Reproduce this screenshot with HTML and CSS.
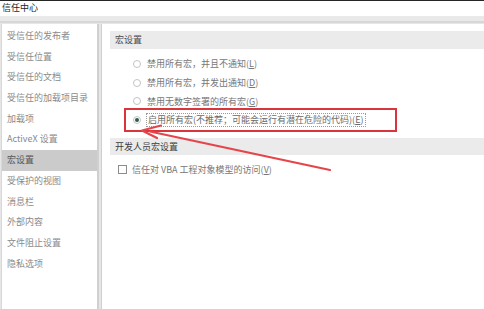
FILE: index.html
```html
<!DOCTYPE html>
<html lang="zh-CN">
<head>
<meta charset="utf-8">
<title>信任中心</title>
<link rel="stylesheet" href="styles.css">
</head>
<body>
<div class="window">
  <div class="titlebar">信任中心</div>
  <div class="strip"></div>
  <div class="main">
    <nav class="nav">
      <div class="nav-item">受信任的发布者</div>
      <div class="nav-item">受信任位置</div>
      <div class="nav-item">受信任的文档</div>
      <div class="nav-item">受信任的加载项目录</div>
      <div class="nav-item">加载项</div>
      <div class="nav-item">ActiveX 设置</div>
      <div class="nav-item active">宏设置</div>
      <div class="nav-item">受保护的视图</div>
      <div class="nav-item">消息栏</div>
      <div class="nav-item">外部内容</div>
      <div class="nav-item">文件阻止设置</div>
      <div class="nav-item">隐私选项</div>
    </nav>
    <section class="content">
      <div class="section-head">宏设置</div>
      <div class="options">
        <div class="option"><span class="radio"></span><span class="label">禁用所有宏，并且不通知(<u>L</u>)</span></div>
        <div class="option"><span class="radio"></span><span class="label">禁用所有宏，并发出通知(<u>D</u>)</span></div>
        <div class="option"><span class="radio"></span><span class="label">禁用无数字签署的所有宏(<u>G</u>)</span></div>
        <div class="option selected"><span class="radio checked"></span><span class="label focus">启用所有宏(不推荐；可能会运行有潜在危险的代码)(<u>E</u>)</span></div>
      </div>
      <div class="section-head second">开发人员宏设置</div>
      <div class="check-row"><span class="checkbox"></span><span class="label">信任对 VBA 工程对象模型的访问(<u>V</u>)</span></div>
    </section>
  </div>
</div>
<div class="highlight"></div>
<svg class="arrow" width="484" height="309" viewBox="0 0 484 309">
  <path d="M330 170 L150 131.5" stroke="#e5454a" stroke-width="2.2" fill="none" stroke-linecap="round"/>
  <path d="M161 125.5 L142 130.5 L157 138" stroke="#e5454a" stroke-width="2.2" fill="none" stroke-linecap="round" stroke-linejoin="round"/>
</svg>
</body>
</html>
```
FILE: styles.css
```css
html, body {
  margin: 0;
  padding: 0;
  background: #ffffff;
  overflow: hidden;
}
body {
  width: 484px;
  height: 309px;
  position: relative;
  font-family: "Noto Sans CJK SC", "Noto Sans", sans-serif;
  font-size: 9px;
}
.window {
  display: flex;
  flex-direction: column;
  height: 309px;
  border-top: 1px solid #262626;
  box-sizing: border-box;
}
.titlebar {
  height: 15px;
  line-height: 13px;
  padding-left: 2px;
  color: #1e1e1e;
  font-size: 9px;
}
.strip {
  height: 5px;
  background: #e9e9e9;
  border-bottom: 2px solid #d7d7d7;
}
.main {
  flex: 1;
  display: flex;
  background: #e6e6e6;
  padding-top: 1px;
  padding-left: 1px;
}
.nav {
  width: 95px;
  background: #ffffff;
  border-left: 1px solid #d8d8d8;
  border-right: 2px solid #d0d0d0;
  padding-top: 2px;
}
.nav-item {
  height: 20.7px;
  line-height: 20.7px;
  padding-left: 5px;
  color: #8a8a8a;
  white-space: nowrap;
}
.nav-item.active {
  background: #cbcbcb;
  color: #555555;
}
.content {
  flex: 1;
  margin-left: 2px;
  background: #ffffff;
  border-left: 1px solid #cfcfcf;
  padding-top: 7px;
  padding-left: 8px;
}
.section-head {
  height: 18px;
  line-height: 18px;
  background: #ebebeb;
  padding-left: 5px;
  color: #4a4a4a;
}
.section-head.second {
  height: 17px;
  line-height: 17px;
  margin-top: 9px;
  color: #3c3c3c;
}
.options {
  padding-top: 5.6px;
}
.option {
  height: 18.7px;
  display: flex;
  align-items: center;
  padding-left: 23px;
  gap: 6px;
  color: #777777;
}
.radio {
  width: 8px;
  height: 8px;
  box-sizing: border-box;
  border: 1px solid #c4c4c4;
  border-radius: 50%;
  background: #ffffff;
  flex: none;
  display: flex;
  align-items: center;
  justify-content: center;
}
.radio.checked::after {
  content: "";
  width: 4px;
  height: 4px;
  border-radius: 50%;
  background: #2e5b4c;
}
.label {
  white-space: nowrap;
}
.label u {
  text-decoration: underline;
}
.focus {
  border: 1px dotted #9a9a9a;
  padding: 0 1px;
  margin-left: -1px;
  line-height: 12px;
  color: #6a6a6a;
}
.check-row {
  height: 18px;
  margin-top: 5px;
  display: flex;
  align-items: center;
  padding-left: 8px;
  gap: 5px;
  color: #777777;
}
.checkbox {
  width: 9px;
  height: 9px;
  box-sizing: border-box;
  border: 1px solid #8c8c8c;
  background: #ffffff;
  flex: none;
}
.highlight {
  position: absolute;
  left: 124px;
  top: 108px;
  width: 273px;
  height: 24px;
  box-sizing: border-box;
  border: 2px solid #d9363c;
}
.arrow {
  position: absolute;
  left: 0;
  top: 0;
  pointer-events: none;
}
```
